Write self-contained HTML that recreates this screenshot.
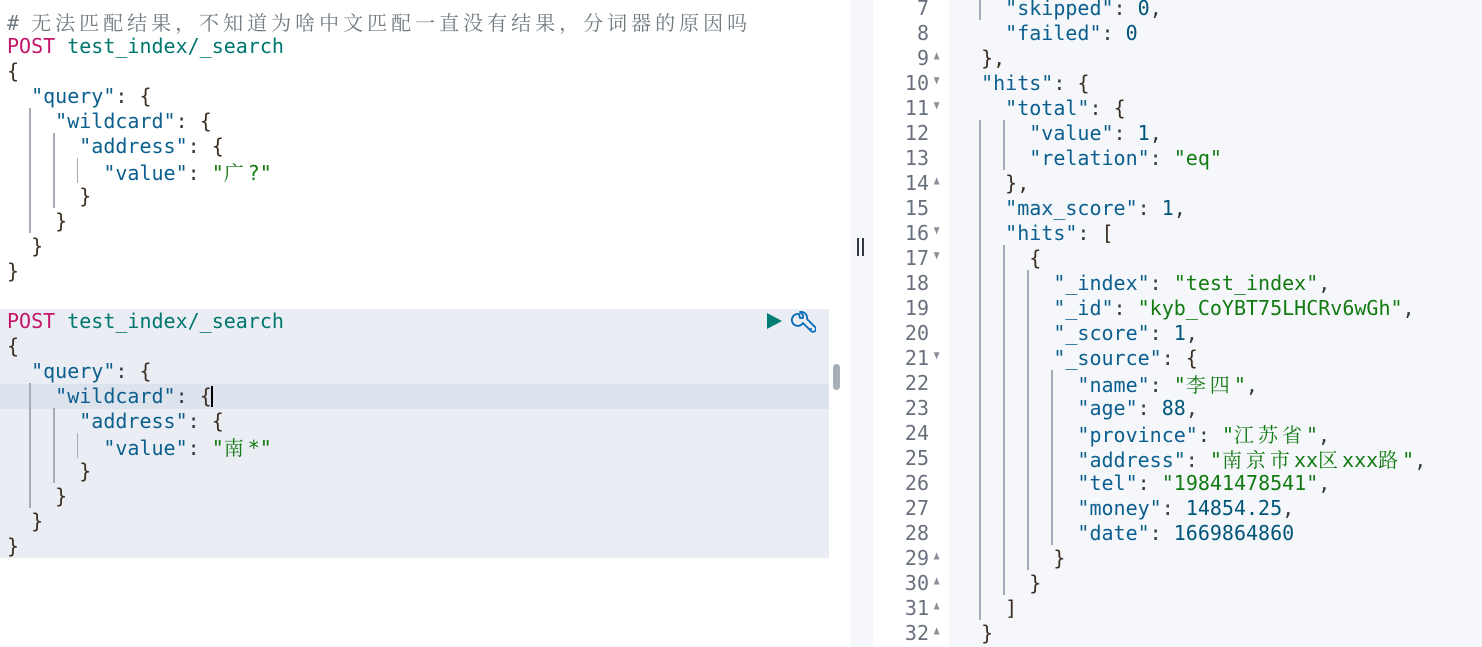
<!DOCTYPE html>
<html><head><meta charset="utf-8"><style>
*{margin:0;padding:0;box-sizing:border-box}
body{width:1482px;height:647px;overflow:hidden;background:#fff;position:relative;font-family:"DejaVu Sans Mono","Liberation Mono","Noto Sans CJK SC",monospace;font-size:20px;color:#343741}
.l{position:absolute;height:25px;line-height:25px;white-space:pre;margin-top:1px}
.k{color:#0b5f8f}.s{color:#117a11}.n{color:#00567a}.m{color:#c4166a}.p{color:#00776e}.c{color:#6f7a80}
.b{color:#3b2f22}
.g{position:absolute;width:2px;background:#a5acb8}
.ln{position:absolute;left:872px;width:57px;text-align:right;height:25px;line-height:25px;color:#69707d;margin-top:1px}
.ar{position:absolute;left:933px;font-size:12px;color:#8a9099;height:25px;line-height:25px;transform:scaleX(0.8)}
.cj{font-family:"Noto Serif CJK SC","Noto Sans CJK SC",serif;letter-spacing:4px}
</style></head><body>
<div style="position:absolute;left:0;top:309px;width:829px;height:249px;background:#eaedf3"></div>
<div style="position:absolute;left:0;top:384px;width:829px;height:25px;background:#dde3ec"></div>
<div style="position:absolute;left:833px;top:364px;width:7px;height:26px;background:#a9afb7;border-radius:4px"></div>
<div style="position:absolute;left:850px;top:0;width:23px;height:647px;background:#f5f7fa"></div>
<div style="position:absolute;left:857px;top:238px;width:2px;height:18px;background:#343741"></div>
<div style="position:absolute;left:862px;top:238px;width:2px;height:18px;background:#343741"></div>
<div style="position:absolute;left:949px;top:0;width:533px;height:647px;background:#f5f7fa"></div>

<div class="g" style="left:29px;top:108px;height:125px"></div>
<div class="g" style="left:53px;top:133px;height:75px"></div>
<div class="g" style="left:77px;top:158px;height:25px;width:1px"></div>
<div class="g" style="left:29px;top:383px;height:125px"></div>
<div class="g" style="left:53px;top:408px;height:75px"></div>
<div class="g" style="left:77px;top:433px;height:25px;width:1px"></div>

<div class="l c" style="left:7px;top:8px"># <span class="cj">无法匹配结果，不知道为啥中文匹配一直没有结果，分词器的原因吗</span></div>
<div class="l" style="left:7px;top:33px"><span class="m">POST</span> <span class="p">test_index/_search</span></div>
<div class="l b" style="left:7px;top:58px">{</div>
<div class="l" style="left:7px;top:83px">  <span class="k">"query"</span>: <span class="b">{</span></div>
<div class="l" style="left:7px;top:108px">    <span class="k">"wildcard"</span>: <span class="b">{</span></div>
<div class="l" style="left:7px;top:133px">      <span class="k">"address"</span>: <span class="b">{</span></div>
<div class="l" style="left:7px;top:158px">        <span class="k">"value"</span>: <span class="s">"<span class="cj">广</span>?"</span></div>
<div class="l b" style="left:7px;top:183px">      }</div>
<div class="l b" style="left:7px;top:208px">    }</div>
<div class="l b" style="left:7px;top:233px">  }</div>
<div class="l b" style="left:7px;top:258px">}</div>

<div class="l" style="left:7px;top:308px"><span class="m">POST</span> <span class="p">test_index/_search</span></div>
<div class="l b" style="left:7px;top:333px">{</div>
<div class="l" style="left:7px;top:358px">  <span class="k">"query"</span>: <span class="b">{</span></div>
<div class="l" style="left:7px;top:383px">    <span class="k">"wildcard"</span>: <span class="b">{</span></div>
<div style="position:absolute;left:211px;top:386px;width:2px;height:21px;background:#000"></div>
<div class="l" style="left:7px;top:408px">      <span class="k">"address"</span>: <span class="b">{</span></div>
<div class="l" style="left:7px;top:433px">        <span class="k">"value"</span>: <span class="s">"<span class="cj">南</span>*"</span></div>
<div class="l b" style="left:7px;top:458px">      }</div>
<div class="l b" style="left:7px;top:483px">    }</div>
<div class="l b" style="left:7px;top:508px">  }</div>
<div class="l b" style="left:7px;top:533px">}</div>

<svg style="position:absolute;left:766px;top:311px" width="50" height="24" viewBox="0 0 50 24">
<path d="M1 2 L16 10 L1 18 Z" fill="#017d73"/>
<path d="M33 3 a6 6 0 1 0 4 9 l8 8 a2.5 2.5 0 0 0 4-4 l-8-8 a6 6 0 0 0-7-7 l3 3 v3 h-3 z" fill="none" stroke="#006bb8" stroke-width="1.8" stroke-linejoin="round"/>
<circle cx="45" cy="18" r="1" fill="#006bb8"/>
</svg>

<div class="g" style="left:979px;top:0;height:20px"></div>
<div class="g" style="left:979px;top:120px;height:500px"></div>
<div class="g" style="left:1003px;top:120px;height:50px"></div>
<div class="g" style="left:1003px;top:245px;height:350px"></div>
<div class="g" style="left:1027px;top:270px;height:300px"></div>
<div class="g" style="left:1051px;top:370px;height:175px"></div>

<div class="ln" style="top:-5px">7</div>
<div class="ln" style="top:20px">8</div>
<div class="ln" style="top:45px">9</div><div class="ar" style="top:43px">▲</div>
<div class="ln" style="top:70px">10</div><div class="ar" style="top:68px">▼</div>
<div class="ln" style="top:95px">11</div><div class="ar" style="top:93px">▼</div>
<div class="ln" style="top:120px">12</div>
<div class="ln" style="top:145px">13</div>
<div class="ln" style="top:170px">14</div><div class="ar" style="top:168px">▲</div>
<div class="ln" style="top:195px">15</div>
<div class="ln" style="top:220px">16</div><div class="ar" style="top:218px">▼</div>
<div class="ln" style="top:245px">17</div><div class="ar" style="top:243px">▼</div>
<div class="ln" style="top:270px">18</div>
<div class="ln" style="top:295px">19</div>
<div class="ln" style="top:320px">20</div>
<div class="ln" style="top:345px">21</div><div class="ar" style="top:343px">▼</div>
<div class="ln" style="top:370px">22</div>
<div class="ln" style="top:395px">23</div>
<div class="ln" style="top:420px">24</div>
<div class="ln" style="top:445px">25</div>
<div class="ln" style="top:470px">26</div>
<div class="ln" style="top:495px">27</div>
<div class="ln" style="top:520px">28</div>
<div class="ln" style="top:545px">29</div><div class="ar" style="top:543px">▲</div>
<div class="ln" style="top:570px">30</div><div class="ar" style="top:568px">▲</div>
<div class="ln" style="top:595px">31</div><div class="ar" style="top:593px">▲</div>
<div class="ln" style="top:620px">32</div><div class="ar" style="top:618px">▲</div>

<div class="l" style="left:957px;top:-5px">    <span class="k">"skipped"</span>: <span class="n">0</span>,</div>
<div class="l" style="left:957px;top:20px">    <span class="k">"failed"</span>: <span class="n">0</span></div>
<div class="l b" style="left:957px;top:45px">  },</div>
<div class="l" style="left:957px;top:70px">  <span class="k">"hits"</span>: <span class="b">{</span></div>
<div class="l" style="left:957px;top:95px">    <span class="k">"total"</span>: <span class="b">{</span></div>
<div class="l" style="left:957px;top:120px">      <span class="k">"value"</span>: <span class="n">1</span>,</div>
<div class="l" style="left:957px;top:145px">      <span class="k">"relation"</span>: <span class="s">"eq"</span></div>
<div class="l b" style="left:957px;top:170px">    },</div>
<div class="l" style="left:957px;top:195px">    <span class="k">"max_score"</span>: <span class="n">1</span>,</div>
<div class="l" style="left:957px;top:220px">    <span class="k">"hits"</span>: <span class="b">[</span></div>
<div class="l b" style="left:957px;top:245px">      {</div>
<div class="l" style="left:957px;top:270px">        <span class="k">"_index"</span>: <span class="s">"test_index"</span>,</div>
<div class="l" style="left:957px;top:295px">        <span class="k">"_id"</span>: <span class="s">"kyb_CoYBT75LHCRv6wGh"</span>,</div>
<div class="l" style="left:957px;top:320px">        <span class="k">"_score"</span>: <span class="n">1</span>,</div>
<div class="l" style="left:957px;top:345px">        <span class="k">"_source"</span>: <span class="b">{</span></div>
<div class="l" style="left:957px;top:370px">          <span class="k">"name"</span>: <span class="s">"<span class="cj">李四</span>"</span>,</div>
<div class="l" style="left:957px;top:395px">          <span class="k">"age"</span>: <span class="n">88</span>,</div>
<div class="l" style="left:957px;top:420px">          <span class="k">"province"</span>: <span class="s">"<span class="cj">江苏省</span>"</span>,</div>
<div class="l" style="left:957px;top:445px">          <span class="k">"address"</span>: <span class="s">"<span class="cj">南京市</span>xx<span class="cj">区</span>xxx<span class="cj">路</span>"</span>,</div>
<div class="l" style="left:957px;top:470px">          <span class="k">"tel"</span>: <span class="s">"19841478541"</span>,</div>
<div class="l" style="left:957px;top:495px">          <span class="k">"money"</span>: <span class="n">14854.25</span>,</div>
<div class="l" style="left:957px;top:520px">          <span class="k">"date"</span>: <span class="n">1669864860</span></div>
<div class="l b" style="left:957px;top:545px">        }</div>
<div class="l b" style="left:957px;top:570px">      }</div>
<div class="l b" style="left:957px;top:595px">    ]</div>
<div class="l b" style="left:957px;top:620px">  }</div>
</body></html>
